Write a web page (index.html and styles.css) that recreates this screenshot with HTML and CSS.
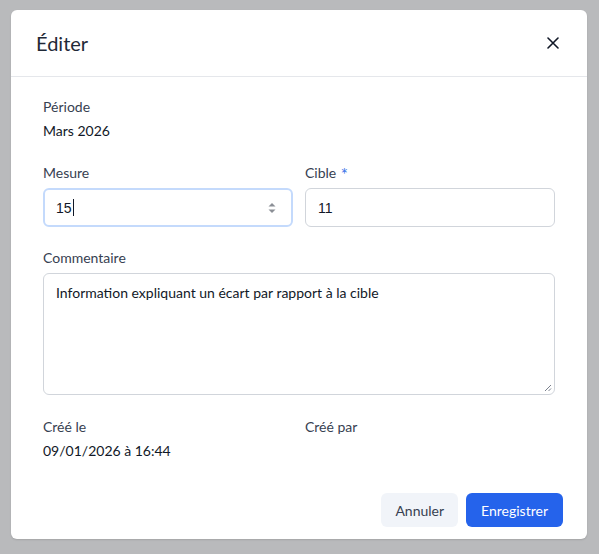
FILE: index.html
```html
<!DOCTYPE html>
<html lang="fr">
<head>
<meta charset="utf-8">
<title>Éditer</title>
<link rel="stylesheet" href="styles.css">
</head>
<body>
<div class="overlay">
  <div class="modal">
    <div class="modal-header">
      <h2 class="modal-title">Éditer</h2>
      <button class="close-btn" type="button" aria-label="Fermer">
        <svg width="12" height="12" viewBox="0 0 12 12"><path d="M1 1L11 11M11 1L1 11" stroke="#111827" stroke-width="1.6" stroke-linecap="round" fill="none"/></svg>
      </button>
    </div>
    <div class="modal-body">
      <div class="field">
        <div class="label">Période</div>
        <div class="value">Mars 2026</div>
      </div>
      <div class="row">
        <div class="field field-input">
          <label class="label">Mesure</label>
          <div class="input input-focus">
            <span class="input-text">15</span><span class="caret"></span>
            <span class="spinner">
              <svg width="10" height="16" viewBox="0 0 10 16"><path d="M1.5 6.5L5 3L8.5 6.5Z" fill="#8b8f96"/><path d="M1.5 9.5L5 13L8.5 9.5Z" fill="#8b8f96"/></svg>
            </span>
          </div>
        </div>
        <div class="field field-input">
          <label class="label">Cible <span class="req">*</span></label>
          <div class="input"><span class="input-text">11</span></div>
        </div>
      </div>
      <div class="field field-input">
        <label class="label">Commentaire</label>
        <div class="textarea">Information expliquant un écart par rapport à la cible
          <svg class="grip" width="8" height="8" viewBox="0 0 8 8"><path d="M7 1L1 7M7 4.5L4.5 7" stroke="#6b7280" stroke-width="0.9" fill="none"/></svg>
        </div>
      </div>
      <div class="row">
        <div class="field">
          <div class="label">Créé le</div>
          <div class="value">09/01/2026 à 16:44</div>
        </div>
        <div class="field">
          <div class="label">Créé par</div>
          <div class="value"></div>
        </div>
      </div>
    </div>
    <div class="modal-footer">
      <button class="btn btn-secondary" type="button">Annuler</button>
      <button class="btn btn-primary" type="button">Enregistrer</button>
    </div>
  </div>
</div>
</body>
</html>
```
FILE: styles.css
```css
* { box-sizing: border-box; }
html, body { margin: 0; padding: 0; }
body {
  background: #b9babc;
  font-family: "Lato", "Noto Sans", sans-serif;
  font-size: 14px;
  line-height: 20px;
  color: #111827;
}
.overlay {
  padding: 10px 12px 15px 11px;
  min-height: 554px;
}
.modal {
  width: 576px;
  height: 529px;
  background: #ffffff;
  border-radius: 6px;
  box-shadow: 0 1px 2px rgba(0,0,0,0.12);
  display: flex;
  flex-direction: column;
}
.modal-header {
  height: 67px;
  border-bottom: 1px solid #e5e7eb;
  display: flex;
  align-items: center;
  justify-content: space-between;
  padding: 0 28px 0 25px;
}
.modal-title {
  margin: 0;
  font-size: 20px;
  font-weight: 400;
  line-height: 28px;
  color: #1f2937;
}
.close-btn {
  background: none;
  border: 0;
  padding: 0;
  width: 12px;
  height: 12px;
  display: flex;
}
.modal-body {
  padding: 20px 32px 0 32px;
  display: flex;
  flex-direction: column;
  gap: 22px;
}
.row {
  display: grid;
  grid-template-columns: 1fr 1fr;
  column-gap: 12px;
}
.row + .field { margin-top: -1px; }
.field {
  display: flex;
  flex-direction: column;
  gap: 4px;
}
.field-input { gap: 5px; }
.label {
  color: #374151;
  font-size: 14px;
  line-height: 20px;
}
.value {
  color: #111827;
  min-height: 20px;
}
.req {
  color: #3b74e8;
  font-size: 17px;
  line-height: 0;
  vertical-align: -3px;
  margin-left: 1px;
}
.input {
  height: 39px;
  border: 1px solid #d1d5db;
  border-radius: 6px;
  display: flex;
  align-items: center;
  padding: 0 12px;
  font-family: "Liberation Sans", Arial, sans-serif;
  font-size: 14px;
  color: #111827;
}
.input-focus {
  border: 2px solid #c4dafc;
  padding: 0 11px;
}
.caret {
  width: 1px;
  height: 17px;
  background: #111827;
  margin-left: 1px;
}
.spinner {
  margin-left: auto;
  display: flex;
  margin-right: 3px;
}
.textarea {
  position: relative;
  height: 122px;
  border: 1px solid #d1d5db;
  border-radius: 6px;
  padding: 9px 12px;
  color: #111827;
}
.grip {
  position: absolute;
  right: 2px;
  bottom: 2px;
}
.modal-footer {
  margin-top: auto;
  padding: 0 24px 12px 0;
  display: flex;
  justify-content: flex-end;
  gap: 8px;
}
.btn {
  height: 34px;
  border: 0;
  border-radius: 6px;
  font-family: inherit;
  font-size: 14px;
  padding: 0 15px;
}
.btn-secondary {
  background: #f1f4f9;
  color: #374151;
  padding: 0 14px;
}
.btn-primary {
  background: #2563eb;
  color: #ffffff;
}
```
